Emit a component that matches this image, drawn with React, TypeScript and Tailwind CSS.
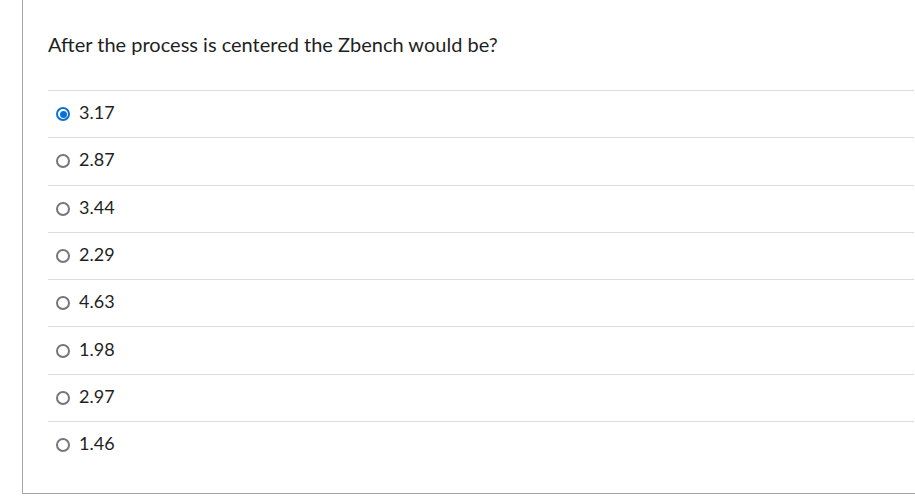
const options = ["3.17", "2.87", "3.44", "2.29", "4.63", "1.98", "2.97", "1.46"];

function Radio({ checked }: { checked: boolean }) {
  if (checked) {
    return (
      <span className="w-[14px] h-[14px] rounded-full border-[2px] border-[#0b6fd8] flex items-center justify-center shrink-0">
        <span className="w-[7px] h-[7px] rounded-full bg-[#0b6fd8]" />
      </span>
    );
  }
  return <span className="w-[14px] h-[14px] rounded-full border-[2px] border-[#76767f] shrink-0" />;
}

export default function App() {
  const selected = 0;
  return (
    <div className="w-[915px] h-[501px] bg-white overflow-hidden" style={{ fontFamily: "Lato, 'Liberation Sans', sans-serif" }}>
      <div className="ml-[22px] h-[494px] border-l border-b border-[#a6a6a6] flex flex-col">
        <div className="pl-[25px] pt-[30px] h-[90px] text-[20px] leading-[28px] text-[#1f1f1f]">
          After the process is centered the Zbench would be?
        </div>
        <ul className="ml-[25px] mr-px">
          {options.map((o, i) => (
            <li key={o} className="h-[47.3px] border-t border-[#dcdcdc] flex items-center pl-[8px] gap-[9px]">
              <Radio checked={i === selected} />
              <span className="text-[18px] text-[#1f1f1f] -mt-[3px]">{o}</span>
            </li>
          ))}
        </ul>
      </div>
    </div>
  );
}
